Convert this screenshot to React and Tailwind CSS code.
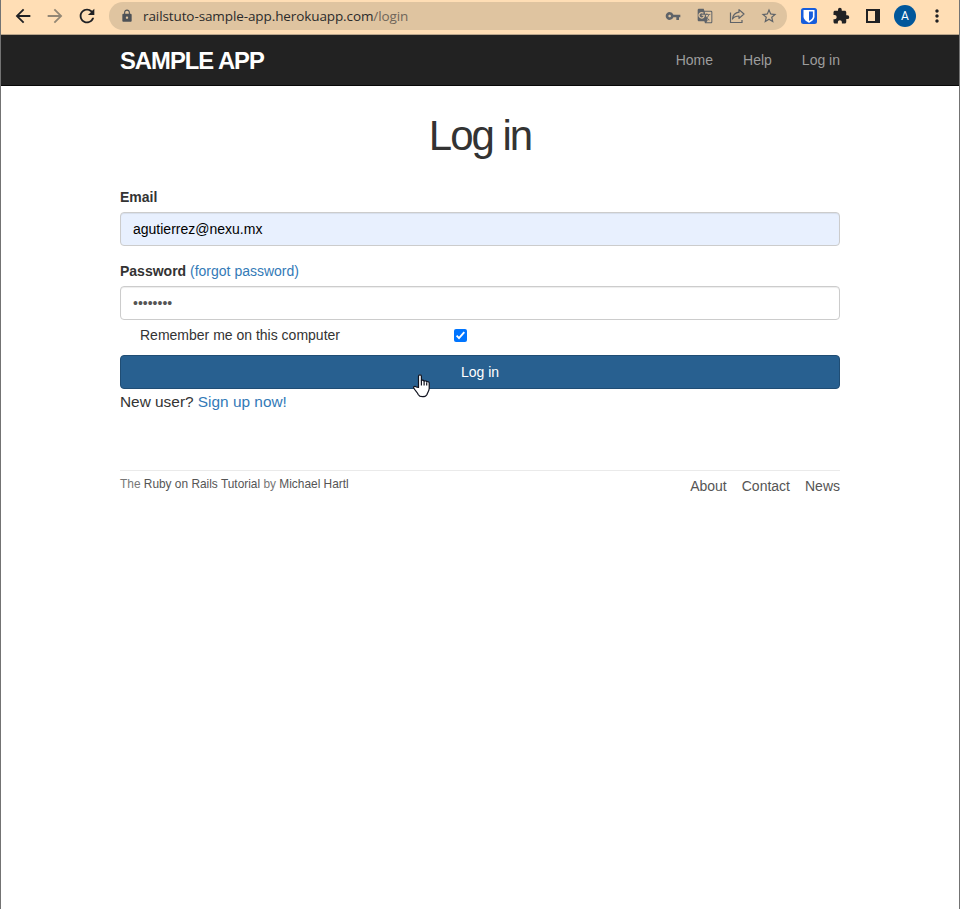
import {
  MdArrowBack,
  MdArrowForward,
  MdRefresh,
  MdLock,
  MdVpnKey,
  MdGTranslate,
  MdStarBorder,
  MdExtension,
  MdMoreVert,
} from "react-icons/md";

function Slot({ children }) {
  return <div className="flex h-8 w-8 shrink-0 items-center justify-center">{children}</div>;
}

function ShareIcon() {
  return (
    <svg width="16" height="16" viewBox="0 0 16 16" fill="none" stroke="#5f6368" strokeWidth="1.2">
      <path d="M1.500 4.500v10h11.500V12" />
      <path d="M10 1.600 15 6l-5 4.400V8C7 8 5 8.800 3.500 11c.4-3.400 2.500-6.300 6.500-6.800z" strokeLinejoin="round" />
    </svg>
  );
}

function ShieldIcon() {
  return (
    <svg width="16" height="16" viewBox="0 0 16 16">
      <rect width="16" height="16" rx="2.500" fill="#175ddc" />
      <path d="M2.500 2h11v6.500c0 2.900-2.700 4.800-5.500 6.200-2.800-1.400-5.500-3.300-5.500-6.200z" fill="#fff" />
      <path d="M8 3.500h3.900v5c0 1.900-1.900 3.300-3.900 4.400z" fill="#175ddc" />
    </svg>
  );
}

function SidePanelIcon() {
  return (
    <svg width="14" height="14" viewBox="0 0 14 14">
      <path d="M0 0h14v14H0zM2 2v10h7V2z" fill="#202124" fillRule="evenodd" />
    </svg>
  );
}

function BrowserBar() {
  return (
    <div className="flex h-[35px] border-b border-[#b9a58b] bg-[#ffdeb5] pl-1.5 text-[#202124]">
      <div className="flex">
        <Slot><MdArrowBack size={22} /></Slot>
        <Slot><MdArrowForward size={22} className="text-[#938775]" /></Slot>
        <Slot><MdRefresh size={22} /></Slot>
      </div>
      <div className="mt-0.5 ml-1.5 flex h-7 w-[678px] items-center rounded-full bg-[#dfc4a0] pr-0.5 pl-[11px]">
        <MdLock size={14} className="text-[#4d5156]" />
        <div className="ml-[9px] font-['Open_Sans','Noto_Sans',sans-serif] text-[13.5px] leading-5 tracking-[-0.1px] whitespace-nowrap text-[#2b2b2b]">
          <span>railstuto-sample-app.herokuapp.com</span>
          <span className="text-[#70665a]">/login</span>
        </div>
        <div className="ml-auto flex text-[#5f6368]">
          <Slot><MdVpnKey size={16} /></Slot>
          <Slot><MdGTranslate size={16} /></Slot>
          <Slot><ShareIcon /></Slot>
          <Slot><MdStarBorder size={18} /></Slot>
        </div>
      </div>
      <div className="ml-1.5 flex">
        <Slot><ShieldIcon /></Slot>
        <Slot><MdExtension size={18} /></Slot>
        <Slot><SidePanelIcon /></Slot>
        <Slot>
          <div className="flex h-[22px] w-[22px] items-center justify-center rounded-full bg-[#01579b] font-[Roboto,sans-serif] text-[12px] text-white">A</div>
        </Slot>
        <Slot><MdMoreVert size={20} /></Slot>
      </div>
    </div>
  );
}

function Navbar() {
  return (
    <header className="h-[51px] border-b border-[#080808] bg-[#222]">
      <div className="mx-auto flex w-[720px] justify-between">
        <a className="pt-[14px] text-[23.8px] leading-6 font-bold tracking-[-1px] text-white">SAMPLE APP</a>
        <nav className="flex gap-[30px] pt-[15px] text-[#9d9d9d]">
          <a>Home</a>
          <a>Help</a>
          <a>Log in</a>
        </nav>
      </div>
    </header>
  );
}

function HandCursor() {
  return (
    <svg className="absolute top-[17px] left-[292px]" width="17" height="25" viewBox="0 0 17 25">
      <path
        d="M5.500 14.500V3.200c0-1.900 2.900-1.900 2.900 0v4.600c.4-1 2.500-.9 2.700.5.600-.9 2.400-.6 2.600.7.900-.7 2.500-.2 2.500 1.300v5.200c0 2.500-1.700 4-2.200 6-.7 1.500-2 2.200-4.500 2.200-2.300 0-3.600-.8-4.300-2.200C4.300 19.300 2.200 17.600.9 15.300c-.9-1.500 1-2.600 2.200-1.500z"
        fill="#fff"
        stroke="#10131f"
        strokeWidth="1.200"
        strokeLinejoin="round"
      />
      <path d="M8.400 7.500v5M11.100 8.500v4M13.700 9.500v3" stroke="#10131f" strokeWidth="1.200" />
    </svg>
  );
}

function Checkbox() {
  return (
    <span className="mt-1 flex h-[13px] w-[13px] items-center justify-center rounded-[2px] bg-[#0075ff]">
      <svg width="11" height="11" viewBox="0 0 11 11" fill="none" stroke="#fff" strokeWidth="1.900">
        <path d="m1.600 5.700 2.400 2.400 5.300-5.900" />
      </svg>
    </span>
  );
}

function LoginForm() {
  return (
    <form>
      <div className="mb-[5px] font-bold">Email</div>
      <div className="mb-[15px] h-[34px] rounded-[4px] border border-[#ccc] bg-[#e8f0fe] px-3 py-1.5 text-black shadow-[inset_0_1px_1px_rgba(0,0,0,0.075)]">
        agutierrez@nexu.mx
      </div>
      <div className="mb-[5px]">
        <span className="font-bold">Password</span> <a className="text-[#337ab7]">(forgot password)</a>
      </div>
      <div className="flex h-[34px] items-center rounded-[4px] border border-[#ccc] bg-white px-3 text-[#555] shadow-[inset_0_1px_1px_rgba(0,0,0,0.075)]">
        <span>••••••••</span>
      </div>
      <div className="mt-[5px] mb-2.5 flex h-5">
        <span className="ml-5 w-[313.5px] shrink-0">Remember me on this computer</span>
        <Checkbox />
      </div>
      <div className="relative flex h-[34px] items-center justify-center rounded-[4px] border border-[#204d74] bg-[#286090] text-white">
        Log in
        <HandCursor />
      </div>
    </form>
  );
}

export default function App() {
  return (
    <div className="h-[909px] overflow-hidden border-x border-[#737373] bg-white font-['Liberation_Sans',Arial,sans-serif] text-[14px] leading-5 text-[#333]">
      <BrowserBar />
      <Navbar />
      <main className="mx-auto w-[720px] pt-[29px]">
        <h1 className="mb-[30px] text-center text-[42px] leading-[42px] tracking-[-2px]">Log in</h1>
        <LoginForm />
        <p className="mb-2.5 text-[15.4px] leading-[26px]">
          New user? <a className="text-[#337ab7]">Sign up now!</a>
        </p>
        <footer className="mt-[55px] flex justify-between border-t border-[#eaeaea] pt-[5px] text-[#777]">
          <small className="text-[11.9px] leading-4">
            The <a className="text-[#555]">Ruby on Rails Tutorial</a> by <a className="text-[#555]">Michael Hartl</a>
          </small>
          <nav className="flex gap-[15px] text-[#555]">
            <a>About</a>
            <a>Contact</a>
            <a>News</a>
          </nav>
        </footer>
      </main>
    </div>
  );
}
